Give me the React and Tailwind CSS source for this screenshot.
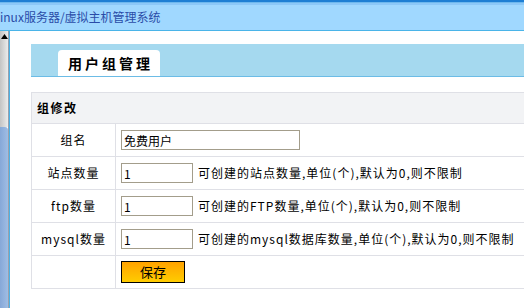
import React from 'react'

const ROWS = [
  { label: '站点数量', value: '1', note: '可创建的站点数量,单位(个),默认为0,则不限制' },
  { label: 'ftp数量', value: '1', note: '可创建的FTP数量,单位(个),默认为0,则不限制' },
  { label: 'mysql数量', value: '1', note: '可创建的mysql数据库数量,单位(个),默认为0,则不限制' },
]

function Row({ label, children }) {
  return (
    <div className="flex h-[33px] border-b border-[#dfe0e6]">
      <div className="w-[84px] shrink-0 border-r border-[#dfe0e6] flex items-center justify-center tracking-[1px]">
        {label}
      </div>
      <div className="flex items-center pl-[5px]">{children}</div>
    </div>
  )
}

export default function App() {
  return (
    <div className="w-[524px] h-[308px] overflow-hidden bg-white text-[12px] text-black font-['Noto_Sans_CJK_SC','Liberation_Sans',sans-serif] flex flex-col">
      {/* top bar */}
      <div className="h-[31px] shrink-0 flex flex-col border-b border-[#4ab4e8]">
        <div className="h-[2px] bg-[#1e7fd4]" />
        <div className="h-[1px] bg-[#6eb8ee]" />
        <div className="h-[2px] bg-[#8cc8f8]" />
        <div className="flex-1 bg-[#a0d8ff] flex items-center pb-[2px]">
          <span className="text-[12px] text-[#2a4ca8]">inux服务器/虚拟主机管理系统</span>
        </div>
      </div>

      <div className="flex flex-1 min-h-0">
        {/* left frame edge */}
        <div className="w-[8px] shrink-0 flex flex-col">
          <div className="h-[96px] bg-gradient-to-r from-[#c4c4c4] to-[#ececec] flex justify-center pt-[3px]">
            <svg width="7" height="5" viewBox="0 0 7 5"><path d="M3.5 0 L7 5 L0 5 Z" fill="#000" /></svg>
          </div>
          <div className="flex-1 bg-gradient-to-r from-[#86a8d8] to-[#a0bde4] rounded-tr-[3px]" />
        </div>
        <div className="w-[1px] shrink-0 bg-[#9aa0ac]" />
        <div className="w-[1px] shrink-0 bg-[#4cb2e6]" />

        {/* main */}
        <div className="flex-1 min-w-0 pl-[21px] pt-[13px]">
          <div className="h-[33px] bg-[#a5d9ef] border-b border-[#6cbce6] flex items-end pl-[27px]">
            <div className="w-[102px] h-[26px] bg-white rounded-t-[4px] flex items-center pl-[10px] text-[14px] font-bold tracking-[3px]">
              用户组管理
            </div>
          </div>

          <div className="mt-[15px] w-[560px] border-t border-l border-[#dfe0e6]">
            <div className="h-[31px] bg-[#f2f3f5] border-b border-[#dfe0e6] flex items-center pl-[5px] font-bold tracking-[1.5px]">
              组修改
            </div>
            <Row label="组名">
              <input
                defaultValue="免费用户"
                className="w-[179px] h-[20px] border border-[#a39d8b] px-[2px] text-[12px] outline-none"
              />
            </Row>
            {ROWS.map(r => (
              <Row key={r.label} label={r.label}>
                <input
                  defaultValue={r.value}
                  className="w-[72px] h-[20px] border border-[#a39d8b] px-[2px] text-[12px] outline-none"
                />
                <span className="ml-[5px] tracking-[1px]">{r.note}</span>
              </Row>
            ))}
            <Row label="">
              <button className="w-[64px] h-[22px] border border-black bg-gradient-to-b from-[#ffa200] to-[#ffcc00] text-[13px] flex items-center justify-center">
                保存
              </button>
            </Row>
          </div>
        </div>
      </div>
    </div>
  )
}
